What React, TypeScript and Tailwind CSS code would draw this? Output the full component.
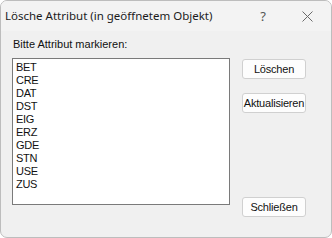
import React from "react";

const items = ["BET", "CRE", "DAT", "DST", "EIG", "ERZ", "GDE", "STN", "USE", "ZUS"];

function Btn({ label }: { label: string }) {
  return (
    <button className="w-[64px] h-[20px] bg-[#fdfdfd] border border-[#d0d0d0] rounded-[3px] text-[11px] leading-none text-[#111] tracking-[-0.2px] [font-family:'Liberation_Sans',Arial,sans-serif] flex items-center justify-center whitespace-nowrap">
      {label}
    </button>
  );
}

export default function App() {
  return (
    <div className="w-[332px] h-[238px] bg-white">
      <div className="w-[332px] h-[238px] bg-[#f0f0f0] border border-[#bdbdbd] rounded-[7px] flex flex-col overflow-hidden">
        <div className="h-[30px] bg-[#f3f3f3] flex items-center pl-[4px] [font-family:'Noto_Sans',sans-serif]">
          <span className="text-[11.5px] text-[#1b1b1b] leading-none flex-1">Lösche Attribut (in geöffnetem Objekt)</span>
          <span className="text-[13px] text-[#555] w-[16px] text-center leading-none mr-[31px]">?</span>
          <svg width="11" height="11" viewBox="0 0 11 11" className="mr-[18px]">
            <path d="M0.5 0.5 L10.5 10.5 M10.5 0.5 L0.5 10.5" stroke="#6a6a6a" strokeWidth="1" fill="none" />
          </svg>
        </div>
        <div className="flex-1 flex pl-[11px] pr-[25px] [font-family:'Liberation_Sans',Arial,sans-serif]">
          <div className="flex flex-col w-[218px]">
            <div className="text-[11px] text-[#111] leading-none mt-[8px] ml-[1px]">Bitte Attribut markieren:</div>
            <div className="mt-[8px] h-[147px] bg-white border border-[#7a7a7a] pl-[3px] pt-[2px]">
              {items.map((it) => (
                <div key={it} className="text-[11px] leading-[13px] text-[#111] tracking-[-0.3px]">{it}</div>
              ))}
            </div>
          </div>
          <div className="flex-1 flex flex-col items-end pt-[28px]">
            <Btn label="Löschen" />
            <div className="mt-[14px]"><Btn label="Aktualisieren" /></div>
            <div className="mt-[84px]"><Btn label="Schließen" /></div>
          </div>
        </div>
      </div>
    </div>
  );
}
